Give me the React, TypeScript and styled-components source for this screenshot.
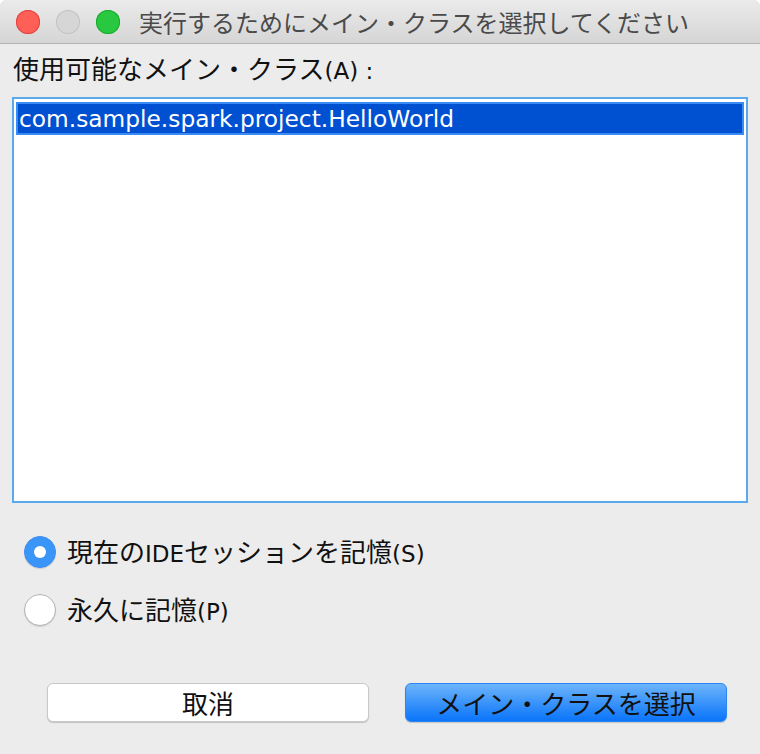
import React from "react";
import styled, { createGlobalStyle } from "styled-components";

const Global = createGlobalStyle`
  html, body { margin: 0; padding: 0; background: #ffffff; }
  body { width: 760px; height: 754px; overflow: hidden; }
`;

const JP = `"Noto Sans CJK JP", "Noto Sans", sans-serif`;
const LAT = `"DejaVu Sans", "Noto Sans CJK JP", sans-serif`;

const Window = styled.div`
  width: 760px;
  height: 754px;
  background: #ececec;
  border-radius: 6px 6px 0 0;
  overflow: hidden;
  display: flex;
  flex-direction: column;
  font-family: ${JP};
  color: #111;
`;

const TitleBar = styled.div`
  height: 43px;
  flex: none;
  display: flex;
  align-items: center;
  padding-left: 16px;
  background: linear-gradient(#ebebeb, #d5d5d5);
  border-bottom: 1px solid #b3b3b3;
`;

const Light = styled.span<{ $c: string; $b: string }>`
  width: 24px;
  height: 24px;
  border-radius: 50%;
  background: ${(p) => p.$c};
  box-shadow: inset 0 0 0 1px ${(p) => p.$b};
  margin-right: 16px;
  flex: none;
`;

const Title = styled.div`
  margin-left: 3px;
  font-size: 24px;
  color: #4a4a4a;
  line-height: 1;
`;

const Body = styled.div`
  display: flex;
  flex-direction: column;
  padding: 8px 12px 0 12px;
`;

const Label = styled.div`
  height: 32px;
  line-height: 32px;
  font-size: 26px;
  margin-left: 1px;
  white-space: nowrap;
`;

const Lat = styled.span`
  font-family: ${LAT};
  font-size: 23px;
`;

const ListBox = styled.div`
  margin-top: 13px;
  height: 406px;
  box-sizing: border-box;
  border: 2px solid #5aa9ec;
  background: #fff;
  padding: 3px 2px 2px 2px;
`;

const Row = styled.div<{ $selected?: boolean }>`
  height: 33px;
  box-sizing: border-box;
  display: flex;
  align-items: center;
  padding-left: 1px;
  border: 2px solid ${(p) => (p.$selected ? "#3a8cf4" : "transparent")};
  background: ${(p) => (p.$selected ? "#0050d2" : "transparent")};
  color: ${(p) => (p.$selected ? "#fff" : "#111")};
  font-family: ${LAT};
  font-size: 23.3px;
`;

const Options = styled.div`
  display: flex;
  flex-direction: column;
  gap: 26px;
  margin-top: 33px;
  padding-left: 12px;
`;

const Option = styled.label`
  height: 32px;
  display: flex;
  align-items: center;
  gap: 11px;
  font-size: 26px;
  white-space: nowrap;
`;

const OptionText = styled.span`
  line-height: 32px;
`;

const Radio = styled.span<{ $checked?: boolean }>`
  width: 32px;
  height: 32px;
  border-radius: 50%;
  box-sizing: border-box;
  flex: none;
  display: flex;
  align-items: center;
  justify-content: center;
  background: ${(p) => (p.$checked ? "#3b94f8" : "#fff")};
  border: 1px solid ${(p) => (p.$checked ? "#3b8ef2" : "#b4b4b4")};
  box-shadow: 0 1px 1px rgba(0, 0, 0, 0.12);
  &::after {
    content: "";
    display: ${(p) => (p.$checked ? "block" : "none")};
    width: 12px;
    height: 12px;
    border-radius: 50%;
    background: #fff;
  }
`;

const Buttons = styled.div`
  display: flex;
  justify-content: space-between;
  margin-top: 57px;
  padding: 0 21px 0 35px;
`;

const Button = styled.button<{ $primary?: boolean }>`
  width: 322px;
  height: 39px;
  box-sizing: border-box;
  border-radius: 6px;
  font-family: ${JP};
  font-size: 26px;
  color: #111;
  display: flex;
  align-items: center;
  justify-content: center;
  padding: 0;
  cursor: default;
  border: 1px solid ${(p) => (p.$primary ? "#2b86f4" : "#c8c8c8")};
  background: ${(p) =>
    p.$primary ? "linear-gradient(#6cb4fb, #0a74fa)" : "#ffffff"};
  box-shadow: 0 1px 1px rgba(0, 0, 0, 0.18);
`;

export default function App() {
  return (
    <>
      <Global />
      <Window>
        <TitleBar>
          <Light $c="#fe5f57" $b="#e0443e" />
          <Light $c="#d6d6d6" $b="#c2c2c2" />
          <Light $c="#28c840" $b="#1aab29" />
          <Title>実行するためにメイン・クラスを選択してください</Title>
        </TitleBar>
        <Body>
          <Label>
            使用可能なメイン・クラス<Lat>(A) :</Lat>
          </Label>
          <ListBox>
            <Row $selected>com.sample.spark.project.HelloWorld</Row>
          </ListBox>
          <Options>
            <Option>
              <Radio $checked />
              <OptionText>
                現在の<Lat>IDE</Lat>セッションを記憶<Lat>(S)</Lat>
              </OptionText>
            </Option>
            <Option>
              <Radio />
              <OptionText>
                永久に記憶<Lat>(P)</Lat>
              </OptionText>
            </Option>
          </Options>
          <Buttons>
            <Button>取消</Button>
            <Button $primary>メイン・クラスを選択</Button>
          </Buttons>
        </Body>
      </Window>
    </>
  );
}
